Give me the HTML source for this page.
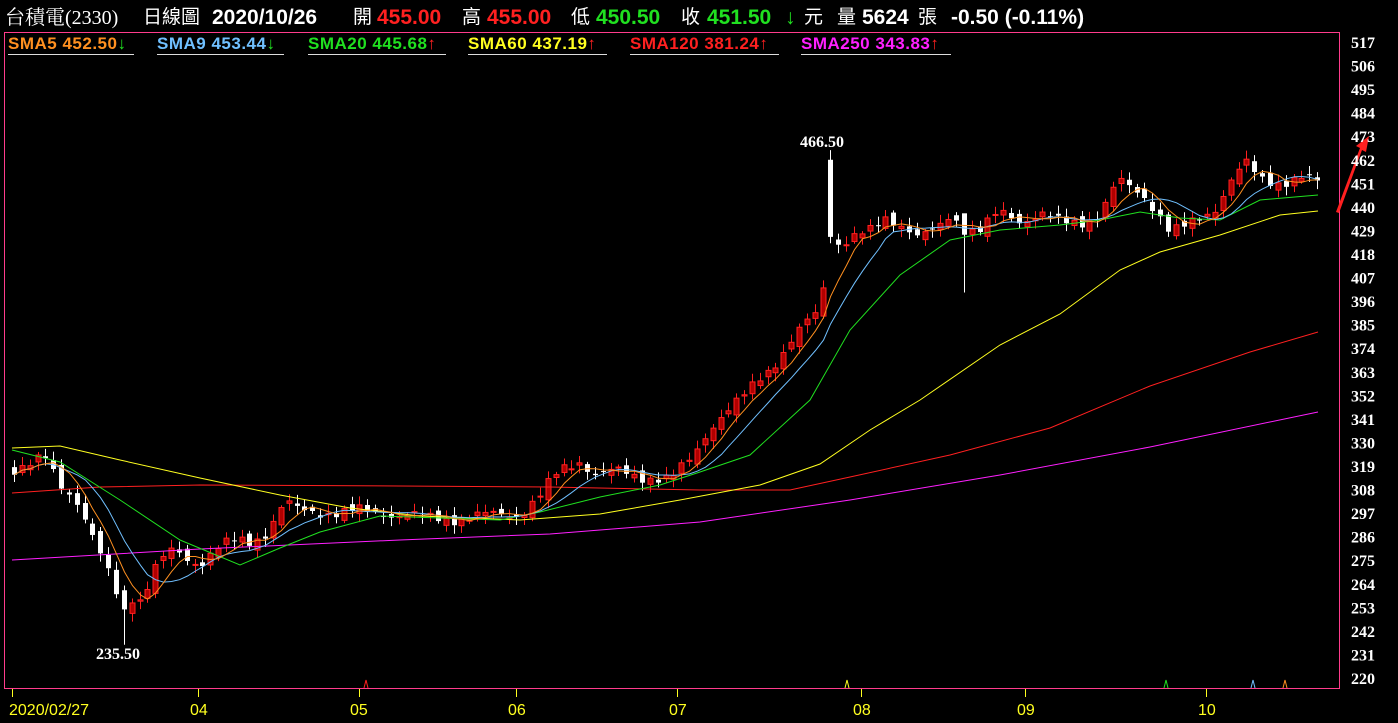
<!DOCTYPE html>
<html><head><meta charset="utf-8"><style>
body{margin:0;background:#000;width:1398px;height:723px;overflow:hidden;font-family:"Liberation Sans","Noto Sans CJK TC",sans-serif}
.h{position:absolute;top:6px;color:#fff;font-size:19px;white-space:nowrap;line-height:24px}
.b{font-weight:bold;font-size:21px}
.r{color:#ff2020}.g{color:#20e020}
.l{position:absolute;top:34px;font-size:17px;letter-spacing:0.5px;font-weight:bold;white-space:nowrap;border-bottom:1px solid #ddd;line-height:19px;padding-bottom:1px;overflow:hidden}
</style></head><body>
<div class="h" style="left:5px;font-family:'Liberation Serif','Noto Serif CJK SC',serif;font-size:20px">台積電(2330)</div>
<div class="h" style="left:143px">日線圖</div>
<div class="h b" style="left:212px">2020/10/26</div>
<div class="h" style="left:353px">開</div><div class="h b r" style="left:377px">455.00</div>
<div class="h" style="left:462px">高</div><div class="h b r" style="left:487px">455.00</div>
<div class="h" style="left:571px">低</div><div class="h b g" style="left:596px">450.50</div>
<div class="h" style="left:681px">收</div><div class="h b g" style="left:707px">451.50</div>
<div class="h g b" style="left:785px">↓</div><div class="h" style="left:804px">元</div>
<div class="h" style="left:837px">量</div><div class="h b" style="left:862px">5624</div>
<div class="h" style="left:918px">張</div><div class="h b" style="left:951px">-0.50 (-0.11%)</div>
<div class="l" style="left:8px;width:126px;color:#ff9020">SMA5 452.50<span class="g">↓</span></div>
<div class="l" style="left:157px;width:127px;color:#70c0ff">SMA9 453.44<span class="g">↓</span></div>
<div class="l" style="left:308px;width:138px;color:#20e020">SMA20 445.68<span class="r">↑</span></div>
<div class="l" style="left:468px;width:139px;color:#ffff20">SMA60 437.19<span class="r">↑</span></div>
<div class="l" style="left:630px;width:149px;color:#ff2020">SMA120 381.24<span class="r">↑</span></div>
<div class="l" style="left:801px;width:150px;color:#ff20ff">SMA250 343.83<span class="r">↑</span></div>
<svg id="s" width="1398" height="723" style="position:absolute;left:0;top:0">
<rect x="4.5" y="32.5" width="1335" height="656" fill="none" stroke="#ff3c8c"/>
<g id="c"></g>
<polyline fill="none" stroke="#ff20ff" points="12,560 200,549 400,540 550,534 700,522 850,500 1000,475 1150,447 1318,412"/>
<polyline fill="none" stroke="#ff2020" points="12,493 100,487 200,485 400,486 550,487 700,490 790,490 850,477 950,455 1050,428 1150,386 1250,352 1318,332"/>
<polyline fill="none" stroke="#ffff20" points="12,448 60,446 120,460 200,478 280,495 350,508 420,516 520,520 600,514 680,500 760,485 820,464 870,430 920,400 1000,345 1060,314 1120,270 1160,252 1220,235 1280,215 1318,211"/>
<polyline fill="none" stroke="#20e020" points="12,450 60,462 120,500 180,540 240,565 280,548 320,532 380,516 440,518 500,520 540,512 600,497 660,485 700,472 750,455 810,400 850,330 900,275 950,240 1000,230 1060,225 1100,220 1140,212 1180,218 1220,220 1260,200 1318,195"/>
<g id="m"></g>
<text x="800" y="147" fill="#fff" font-family="Liberation Serif,serif" font-weight="bold" font-size="16">466.50</text>
<text x="96" y="659" fill="#fff" font-family="Liberation Serif,serif" font-weight="bold" font-size="16">235.50</text>
<polygon points="1336,212 1360,148 1356,146 1369,136 1366,152 1362,150 1339,213" fill="#ff2020"/>
<g id="ax" font-family="Liberation Serif,serif" font-weight="bold" font-size="16" fill="#fff"></g>
<g id="dx" font-family="Liberation Sans,sans-serif" font-size="16" fill="#ffff20"></g>
<path d="M364,688 L366,680 L368,688" stroke="#ff2020" fill="none"/>
<path d="M845,688 L847,680 L849,688" stroke="#ffff20" fill="none"/>
<path d="M1164,688 L1166,680 L1168,688" stroke="#20e020" fill="none"/>
<path d="M1251,688 L1253,680 L1255,688" stroke="#70c0ff" fill="none"/>
<path d="M1283,688 L1285,680 L1287,688" stroke="#ff9020" fill="none"/>
</svg>
<script>
(function(){
var NS="http://www.w3.org/2000/svg";
function Y(p){return 42+(517-p)*2.1414;}
function el(t,a,par){var e=document.createElementNS(NS,t);for(var k in a)e.setAttribute(k,a[k]);par.appendChild(e);return e;}
var ax=document.getElementById('ax');
for(var i=0;i<28;i++){var p=517-11*i;var t=el('text',{x:1351,y:Y(p)+6},ax);t.textContent=p;}
var dx=document.getElementById('dx');var s=document.getElementById('s');
var d=[[12,'2020/02/27',9],[198,'04',190],[359,'05',350],[516,'06',508],[677,'07',669],[861,'08',853],[1025,'09',1017],[1206,'10',1198]];
d.forEach(function(a){el('line',{x1:a[0]+.5,y1:689,x2:a[0]+.5,y2:697,stroke:'#ffff20'},s);var t=el('text',{x:a[2],y:715},dx);t.textContent=a[1];});
var K=[[12,318],[30,320],[45,322],[60,310],[75,305],[85,295],[95,283],[105,272],[115,260],[125,250],[135,262],[142,255],[150,268],[160,275],[175,279],[185,275],[200,274],[215,281],[230,283],[250,283],[265,288],[285,303],[295,298],[310,297],[330,298],[350,298],[370,297],[400,297],[430,294],[460,295],[500,296],[520,297],[540,305],[560,317],[580,322],[595,315],[620,316],[650,314],[670,312],[690,322],[710,338],[740,349],[760,361],[780,370],[800,382],[815,390],[822,400],[828,426],[835,423],[850,425],[870,428],[885,435],[900,433],[920,425],[940,430],[950,437],[965,430],[980,429],[1000,437],[1020,434],[1040,437],[1060,432],[1080,433],[1100,437],[1118,452],[1130,448],[1140,447],[1155,440],[1170,428],[1185,430],[1200,435],[1215,440],[1230,452],[1245,460],[1260,453],[1280,452],[1300,453],[1318,451]];
function P(x){for(var i=1;i<K.length;i++){if(x<=K[i][0]){var a=K[i-1],b=K[i];return a[1]+(b[1]-a[1])*(x-a[0])/(b[0]-a[0]);}}return 451;}
var g=document.getElementById('c');var closes=[],xs=[];var prev=318;
for(var x=14;x<=1318;x+=7.85){var c=P(x)+Math.sin(x*1.7)*2.2+Math.sin(x*0.37)*1.3;var o=prev+Math.sin(x*2.9)*2;
 var hi=Math.max(o,c)+1+Math.abs(Math.sin(x*5.1))*3,lo=Math.min(o,c)-1-Math.abs(Math.sin(x*3.3))*3;
 if(Math.abs(x-828)<4){o=462;c=426;hi=466.5;lo=423;}
 if(Math.abs(x-124)<4){lo=235.5;}
 if(Math.abs(x-965)<4){o=437;c=427;lo=400;}
 var up=c>=o;var col=up?'#ff2020':'#fff';var xr=Math.round(x);
 el('line',{x1:xr+.5,y1:Y(hi),x2:xr+.5,y2:Y(lo),stroke:col},g);
 var ty=Y(Math.max(o,c)),h=Math.max(1,Math.abs(Y(o)-Y(c)));
 el('rect',{x:xr-2,y:ty,width:5,height:h,fill:up?'#b00000':'#fff',stroke:col,'stroke-width':up?1:0},g);
 closes.push(c);xs.push(xr+.5);prev=c;}
var m=document.getElementById('m');
function ma(n,col){var pts=[];for(var i=0;i<closes.length;i++){var k=Math.min(n,i+1),sm=0;for(var j=i-k+1;j<=i;j++)sm+=closes[j];pts.push(xs[i]+','+Y(sm/k).toFixed(1));}el('polyline',{points:pts.join(' '),fill:'none',stroke:col},m);}
ma(9,'#70c0ff');ma(5,'#ff9020');
})();
</script>
</body></html>
